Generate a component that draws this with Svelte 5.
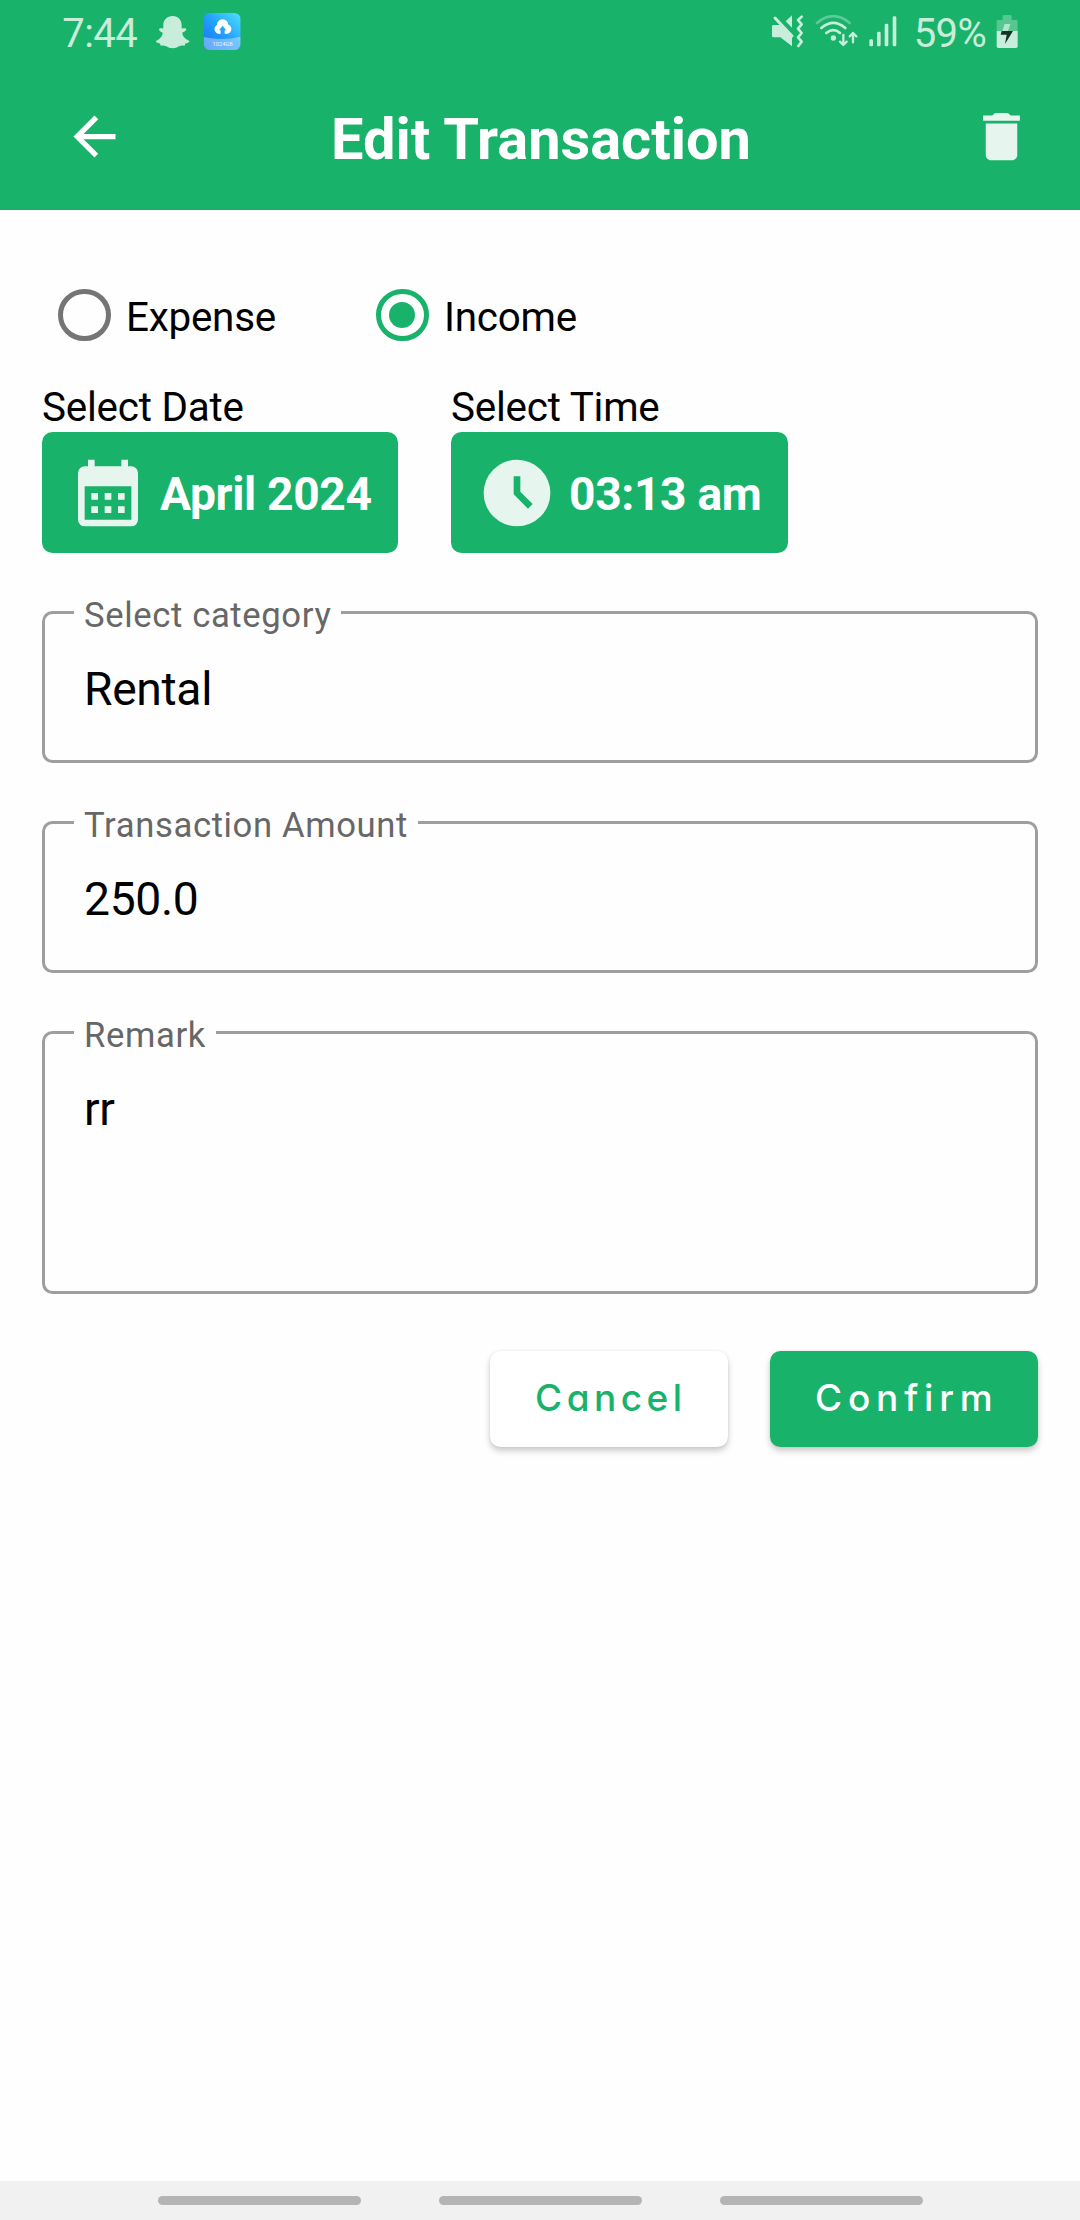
<script>
  let kind = $state('income');
  let category = 'Rental';
  let amount = '250.0';
  let remark = 'rr';
  const kinds = [
    { id: 'expense', label: 'Expense' },
    { id: 'income', label: 'Income' }
  ];
</script>

<div class="screen">
  <div class="status">
    <span class="time">7:44</span>
    <svg class="ghost" viewBox="340 0 120 210" width="40" height="70">
      <path d="M399 48c17 0 27 12 27 27v10c5 1 10-1 13 1 4 4-6 9-11 12 1 12 9 18 20 24 4 3-4 7-10 8-3 2-1 7-4 7-6 0-10-1-16 2-6 3-10 6-19 6s-13-3-19-6c-6-3-10-2-16-2-3 0-1-5-4-7-6-1-15-5-10-8 11-6 18-12 19-24-5-3-14-8-10-12 3-2 8 0 12-1v-10c0-15 11-27 28-27z" />
    </svg>
    <svg class="cloud" viewBox="484 0 128 210" width="42.67" height="70">
      <defs>
        <linearGradient id="sky" x1="0" y1="1" x2="1" y2="0">
          <stop offset="0" stop-color="#146ff8" />
          <stop offset=".5" stop-color="#24a0fc" />
          <stop offset="1" stop-color="#4fe0ff" />
        </linearGradient>
        <clipPath id="tile"><rect x="492" y="39" width="111" height="111" rx="19" /></clipPath>
      </defs>
      <g clip-path="url(#tile)">
        <rect x="492" y="39" width="111" height="111" fill="url(#sky)" />
        <path d="M492 111q55 12 111-1v40H492z" fill="#fff" opacity=".36" />
        <path d="M536 101a14 14 0 0 1-4-26 17 17 0 0 1 34-1 14 14 0 0 1-3 27h-8V91h5l-11-14-11 14h5v10z" fill="#fff" />
        <text x="549" y="138" text-anchor="middle">1024GB</text>
      </g>
    </svg>
    <span class="spacer"></span>
    <svg class="mute" viewBox="60 0 108 210" width="36" height="70">
      <path d="M70 75h20l36 31v33l-35-27H70q-4 0-4-4V79q0-4 4-4zM107 64l19-18v37z" />
      <path class="line" d="M75 54l51 54" stroke-width="9" />
      <path class="line" d="M155 50l-11 10 11 13-11 13 11 13-11 13 11 13-10 13" stroke-width="8" />
    </svg>
    <svg class="wifi" viewBox="192 0 138 210" width="46" height="70">
      <g class="line" stroke-width="8">
        <path d="M201 69q49-41 98 0" opacity=".4" />
        <path d="M214 84q36-31 72 0" />
        <path d="M229 99q21-17 41 0" />
      </g>
      <circle cx="250" cy="114" r="8" />
      <path class="line" stroke-width="7" d="M280 105v29M270 125l10 10 10-10M309 127V99M299 109l10-10 10 10" />
    </svg>
    <svg class="signal" viewBox="350 0 96 210" width="32" height="70">
      <rect x="357" y="118" width="11" height="21" rx="4" />
      <rect x="380" y="95" width="11" height="44" rx="4" />
      <rect x="403" y="71" width="11" height="68" rx="4" />
      <rect x="427" y="49" width="11" height="90" rx="4" />
    </svg>
    <span class="percent">59%</span>
    <svg viewBox="736 0 72 210" width="24" height="70">
      <path opacity=".35" d="M759 49q0-4 4-4h19q4 0 4 4v11h14q4 0 4 4v30h-63V64q0-4 4-4h14z" />
      <path d="M741 93h63v46q0 5-5 5h-53q-5 0-5-5z" />
      <path opacity=".8" d="M765 72h17l-7 21h-17z" />
      <path fill="#12352a" d="M756 93h34l-24 39 5-28h-18z" />
    </svg>
  </div>

  <header>
    <button class="icon" aria-label="Back">
      <svg viewBox="0 0 24 24" width="63" height="63"><path fill="#fff" d="M20 11H7.83l5.59-5.59L12 4l-8 8 8 8 1.41-1.41L7.83 13H20z" /></svg>
    </button>
    <h1>Edit Transaction</h1>
    <button class="icon" aria-label="Delete">
      <svg viewBox="0 0 24 24" width="63" height="63"><path fill="#e6f5ee" d="M6 19c0 1.1.9 2 2 2h8c1.1 0 2-.9 2-2V7H6zM19 4h-3.5l-.7-.7q-.3-.3-.7-.3H9.9q-.4 0-.7.3l-.7.7H5v2h14z" /></svg>
    </button>
  </header>

  <main>
    <div class="kinds">
      {#each kinds as k}
        <button class="kind" role="radio" aria-checked={kind === k.id} onclick={() => (kind = k.id)}>
          <span class="ring" class:on={kind === k.id}></span>
          <span class="kind-label">{k.label}</span>
        </button>
      {/each}
    </div>

    <div class="pickers">
      <div class="picker date">
        <span class="caption">Select Date</span>
        <button class="pick">
          <svg viewBox="0 0 24 24" width="80" height="80">
            <path fill="#e6f5ee" fill-rule="evenodd" d="M6 2h2v2h8V2h2v2h1a2 2 0 0 1 2 2v14a2 2 0 0 1-2 2H5a2 2 0 0 1-2-2V6a2 2 0 0 1 2-2h1zM5 10v10h14V10z" />
            <path fill="#e6f5ee" d="M7 12h2v2H7zM11 12h2v2h-2zM15 12h2v2h-2zM7 16h2v2H7zM11 16h2v2h-2zM15 16h2v2h-2z" />
          </svg>
          <span>April 2024</span>
        </button>
      </div>
      <div class="picker clock">
        <span class="caption">Select Time</span>
        <button class="pick">
          <svg viewBox="0 0 24 24" width="80" height="80">
            <circle cx="12" cy="12" r="10" fill="#e6f5ee" />
            <path fill="#19b26a" d="M11 7h2v4.6l3.7 3.7-1.4 1.4L11 12.4z" />
          </svg>
          <span>03:13 am</span>
        </button>
      </div>
    </div>

    <fieldset>
      <legend><span>Select category</span></legend>
      <div class="value">{category}</div>
    </fieldset>
    <fieldset>
      <legend><span>Transaction Amount</span></legend>
      <div class="value">{amount}</div>
    </fieldset>
    <fieldset class="tall">
      <legend><span>Remark</span></legend>
      <div class="value">{remark}</div>
    </fieldset>

    <div class="actions">
      <button class="action cancel">Cancel</button>
      <button class="action confirm">Confirm</button>
    </div>
  </main>

  <nav>
    <i></i><i></i><i></i>
  </nav>
</div>

<style>
  :global(body) {
    background: #fefefe;
  }
  .screen {
    display: flex;
    flex-direction: column;
    width: 1080px;
    height: 2220px;
    font-family: Roboto, 'Liberation Sans', sans-serif;
    color: #000;
    background: #fefefe;
  }
  .screen * {
    box-sizing: border-box;
  }
  svg {
    display: block;
    flex: none;
  }
  button {
    font: inherit;
    color: inherit;
    border: 0;
    padding: 0;
    margin: 0;
    background: none;
    text-align: left;
  }
  .status {
    display: flex;
    flex: none;
    height: 70px;
    padding: 0 60.67px 0 62.33px;
    background: #19b26a;
    color: #c8eddb;
    fill: #c8eddb;
    font-size: 40px;
    line-height: 67px;
    letter-spacing: -0.6px;
  }
  .time {
    width: 91px;
  }
  .cloud {
    margin-left: 8px;
  }
  .cloud text {
    font-size: 17px;
    letter-spacing: 0;
    fill: #e6f3ff;
  }
  .spacer {
    flex: 1;
  }
  .line {
    fill: none;
    stroke: #c8eddb;
    stroke-linecap: round;
    stroke-linejoin: round;
  }
  .wifi {
    margin: 0 6.67px 0 8px;
  }
  .percent {
    width: 81.67px;
    margin-left: 15px;
  }
  header {
    display: flex;
    flex: none;
    align-items: center;
    justify-content: space-between;
    height: 140px;
    padding: 0 47px 7px 63px;
    background: #19b26a;
    color: #fff;
  }
  h1 {
    margin: 0;
    padding: 5.5px 0 0;
    font-size: 57.75px;
    line-height: 68px;
    font-weight: 700;
    transform: translateX(-7px);
  }
  main {
    flex: 1;
    padding: 78px 42px 0;
  }
  .kinds {
    display: flex;
    padding-left: 16px;
  }
  .kind {
    display: flex;
    width: 318px;
    align-items: center;
    height: 54px;
    gap: 15.5px;
    font-size: 40.4px;
    line-height: 48px;
    letter-spacing: -0.25px;
  }
  .kind-label {
    padding-top: 5px;
  }
  .ring {
    display: flex;
    align-items: center;
    justify-content: center;
    width: 52.5px;
    height: 52.5px;
    border: 5.25px solid #757575;
    border-radius: 50%;
  }
  .ring.on {
    border-color: #19b26a;
  }
  .ring.on::after {
    content: '';
    width: 26px;
    height: 26px;
    border-radius: 50%;
    background: #19b26a;
  }
  .pickers {
    display: flex;
    gap: 53px;
    padding: 42px 0 39px;
  }
  .date {
    width: 356px;
  }
  .clock {
    width: 337px;
  }
  .caption {
    display: block;
    height: 48px;
    font-size: 40.4px;
    line-height: 47px;
    letter-spacing: -0.22px;
  }
  .pick {
    display: flex;
    align-items: center;
    gap: 12.5px;
    width: 100%;
    height: 121px;
    padding-left: 25.5px;
    border-radius: 10.5px;
    background: #19b26a;
    color: #fff;
    font-size: 46.2px;
    font-weight: 700;
    letter-spacing: -0.35px;
    white-space: nowrap;
  }
  .pick span {
    padding-top: 3px;
  }
  fieldset {
    height: 171px;
    margin: 0 0 39px;
    padding: 0 29px;
    border: 3px solid #9e9e9e;
    border-radius: 10.5px;
  }
  .tall {
    height: 282px;
    margin-bottom: 57px;
  }
  legend {
    height: 41px;
    padding: 0 10px;
    color: #676767;
    font-size: 34.65px;
    line-height: 41px;
    letter-spacing: 0.62px;
  }
  legend span {
    display: block;
    transform: translateY(3px);
  }
  .value {
    padding: 29px 10px 0;
    font-size: 46.2px;
    line-height: 54px;
    letter-spacing: -0.3px;
  }
  .actions {
    display: flex;
    justify-content: flex-end;
    gap: 42px;
  }
  .action {
    height: 96px;
    padding: 0 0 4px 45px;
    border-radius: 10.5px;
    font-family: Inter, Roboto, sans-serif;
    font-feature-settings: 'cv11' 1;
    font-size: 37px;
    font-weight: 500;
    box-shadow: 0 4px 6px rgba(0, 0, 0, 0.2), 0 0 3px rgba(0, 0, 0, 0.08);
  }
  .cancel {
    width: 238px;
    background: #fff;
    color: #19b26a;
    letter-spacing: 4.5px;
  }
  .confirm {
    width: 268px;
    background: #19b26a;
    color: #fff;
    letter-spacing: 5.8px;
  }
  nav {
    display: flex;
    flex: none;
    justify-content: center;
    gap: 78px;
    height: 39px;
    padding-top: 15px;
    background: #f1f1f1;
  }
  nav i {
    width: 203px;
    height: 9px;
    border-radius: 5px;
    background: #b4b4b4;
  }
</style>
